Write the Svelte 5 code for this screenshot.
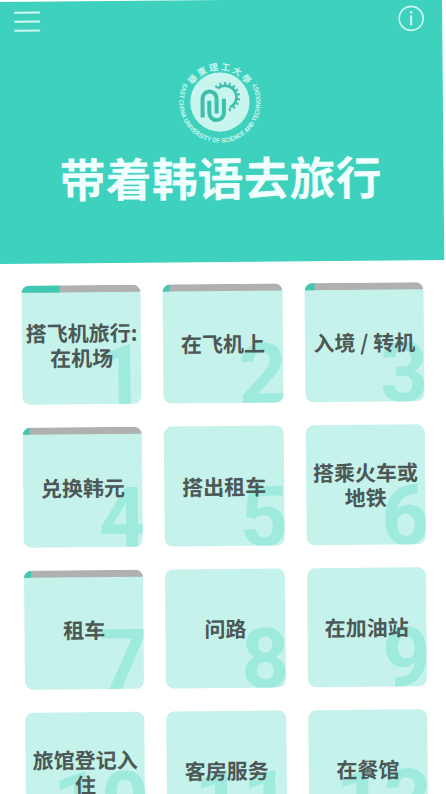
<script lang="ts">
	type Lesson = {
		id: number;
		title: string;
		progress?: number;
	};

	const lessons: Lesson[] = [
		{ id: 1, title: '搭飞机旅行: 在机场', progress: 32 },
		{ id: 2, title: '在飞机上', progress: 6 },
		{ id: 3, title: '入境 / 转机', progress: 9 },
		{ id: 4, title: '兑换韩元', progress: 6 },
		{ id: 5, title: '搭出租车' },
		{ id: 6, title: '搭乘火车或地铁' },
		{ id: 7, title: '租车', progress: 6 },
		{ id: 8, title: '问路' },
		{ id: 9, title: '在加油站' },
		{ id: 10, title: '旅馆登记入住' },
		{ id: 11, title: '客房服务' },
		{ id: 12, title: '在餐馆' }
	];

	// gear teeth around the right side of the emblem
	const teeth = [-130, -110, -90, -70, -50, -30, -10, 10, 30, 50, 70];

	let menuOpen = $state(false);
	let infoOpen = $state(false);
	let selectedId = $state<number>();
</script>

<div class="page">
	<header class="hero">
		<div class="toolbar">
			<button
				class="icon-button"
				aria-label="菜单"
				aria-expanded={menuOpen}
				onclick={() => (menuOpen = !menuOpen)}
			>
				<svg width="26" height="26" viewBox="0 0 26 26" stroke="currentColor" stroke-width="2">
					<line x1="0" y1="4" x2="26" y2="4"></line>
					<line x1="0" y1="13" x2="26" y2="13"></line>
					<line x1="0" y1="22" x2="26" y2="22"></line>
				</svg>
			</button>
			<button
				class="icon-button"
				aria-label="信息"
				aria-expanded={infoOpen}
				onclick={() => (infoOpen = !infoOpen)}
			>
				<svg width="26" height="26" viewBox="0 0 26 26" fill="none" stroke="currentColor">
					<circle cx="13" cy="13" r="12" stroke-width="1.6"></circle>
					<line x1="13" y1="10" x2="13" y2="20" stroke-width="2"></line>
					<circle cx="13" cy="7" r="1.4" fill="currentColor" stroke="none"></circle>
				</svg>
			</button>
		</div>

		<svg class="emblem" width="88" height="88" viewBox="0 0 264 264" aria-hidden="true">
			<defs>
				<path id="ring-top" d="M36 132 A96 96 0 0 1 228 132"></path>
				<path id="ring-bottom" d="M27 70 A122 122 0 1 0 237 70"></path>
			</defs>
			<circle cx="132" cy="132" r="89" fill="#c8f5ee"></circle>
			<text class="ring-cn">
				<textPath href="#ring-top" startOffset="50%" text-anchor="middle">華 東 理 工 大 學</textPath>
			</text>
			<text class="ring-en">
				<textPath href="#ring-bottom" startOffset="50%" text-anchor="middle"
					>EAST CHINA UNIVERSITY OF SCIENCE AND TECHNOLOGY</textPath
				>
			</text>
			<g transform="translate(148 117)" fill="#3ebfac">
				<path d="M-22 -26 A34 34 0 1 1 14 31" fill="none" stroke="#3ebfac" stroke-width="8"></path>
				{#each teeth as angle}
					<rect x="36" y="-3" width="9" height="6" transform="rotate({angle})"></rect>
				{/each}
			</g>
			<g fill="none" stroke="#3ebfac" stroke-width="12">
				<path d="M80 178 V121 A21 21 0 0 1 122 121 V166"></path>
				<path d="M100 128 V164 A22 22 0 0 0 144 164 V122"></path>
			</g>
		</svg>

		<h1>带着韩语去旅行</h1>
	</header>

	<main class="lessons">
		{#each lessons as lesson (lesson.id)}
			<button
				class="tile"
				class:selected={selectedId === lesson.id}
				onclick={() => (selectedId = lesson.id)}
			>
				{#if lesson.progress}
					<span class="progress">
						<span class="progress-fill" style="width: {lesson.progress}%"></span>
					</span>
				{/if}
				<span class="number">{lesson.id}</span>
				<span class="title">{lesson.title}</span>
			</button>
		{/each}
	</main>
</div>

<style>
	:global(body) {
		background: #fff;
		overflow-x: hidden;
	}

	:global(#app) {
		overflow: hidden;
	}

	.page {
		margin: 2px 4px 0 -4px;
		transform: rotate(-0.5deg);
		transform-origin: 0 0;
		font-family: 'Noto Sans CJK SC', sans-serif;
	}

	.hero {
		display: flex;
		flex-direction: column;
		align-items: center;
		box-sizing: border-box;
		min-height: 262px;
		background: #3ed1bd;
	}

	.toolbar {
		display: flex;
		justify-content: space-between;
		align-self: stretch;
		padding: 7px 18px 0;
	}

	.icon-button {
		display: flex;
		padding: 0;
		border: none;
		background: none;
		color: #d2fbf4;
		cursor: pointer;
	}

	.emblem {
		margin-top: 25px;
	}

	.ring-cn {
		font-family: 'Noto Sans CJK TC', sans-serif;
		font-size: 27px;
		font-weight: 700;
		fill: #c8f5ee;
	}

	.ring-en {
		font-family: Roboto, sans-serif;
		font-size: 19px;
		font-weight: 700;
		fill: #c8f5ee;
	}

	h1 {
		margin: 2px 0 0;
		font-size: 46px;
		font-weight: 700;
		line-height: 56px;
		color: #f0fffd;
	}

	.lessons {
		display: grid;
		grid-template-columns: repeat(3, 1fr);
		gap: 23px 22px;
		padding: 22px 21px 22px 23px;
	}

	.tile {
		position: relative;
		display: flex;
		align-items: center;
		justify-content: center;
		aspect-ratio: 1;
		min-width: 0;
		padding: 0;
		border: none;
		border-radius: 8px;
		background: #c6f2ec;
		overflow: hidden;
		font-family: inherit;
		cursor: pointer;
	}

	.tile:hover,
	.tile.selected {
		background: #b8eee6;
	}

	.progress {
		position: absolute;
		top: 0;
		left: 0;
		right: 0;
		height: 7px;
		background: #b0b0b0;
	}

	.progress-fill {
		display: block;
		height: 100%;
		background: #3fc8b2;
	}

	.number {
		position: absolute;
		right: -4px;
		bottom: -2px;
		font-family: Roboto, sans-serif;
		font-size: 84px;
		font-weight: 700;
		line-height: 60px;
		color: #9eeadd;
	}

	.title {
		position: relative;
		font-size: 21px;
		font-weight: 700;
		line-height: 25px;
		color: #4c5856;
	}
</style>
